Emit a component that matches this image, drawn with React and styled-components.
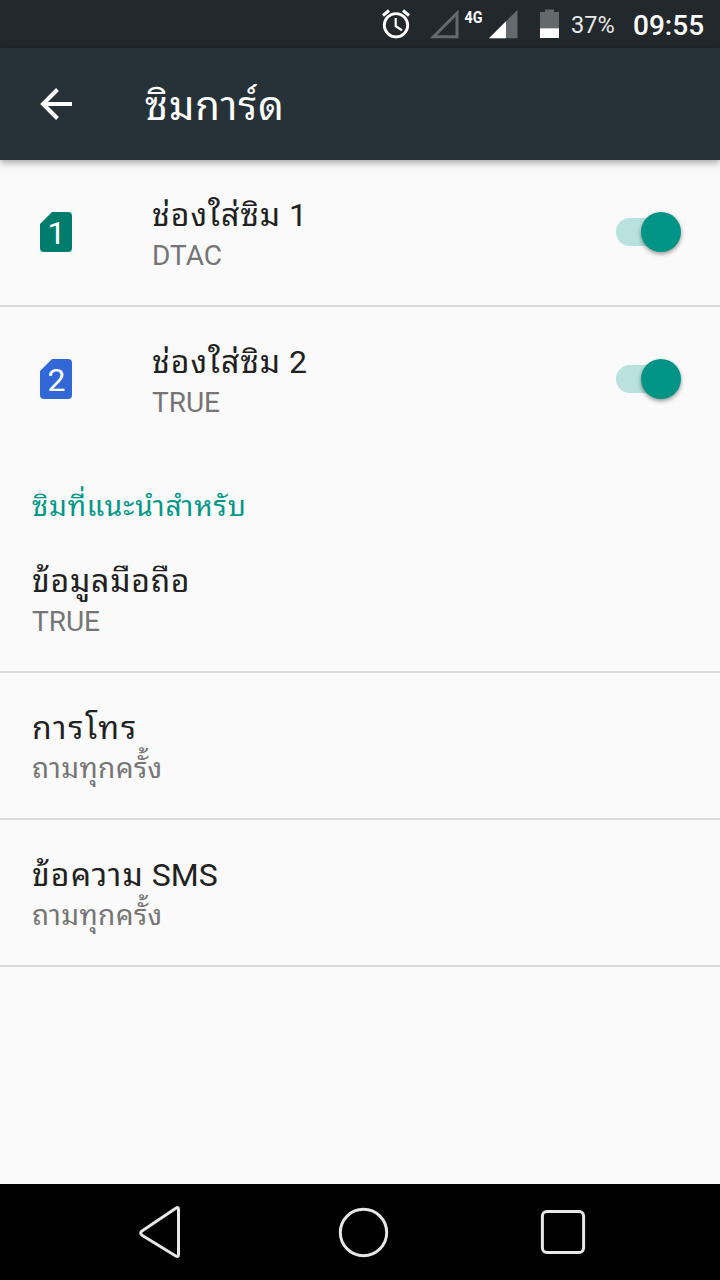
import React from "react";
import styled, { createGlobalStyle } from "styled-components";

const GlobalStyle = createGlobalStyle`
  * { box-sizing: border-box; }
  body { margin: 0; background: #fafafa; font-family: Roboto, "Noto Sans Thai Looped", "Noto Looped Thai", "Droid Sans Thai", Loma, Waree, Garuda, "Noto Serif Thai", Norasi, "Noto Sans Thai", "Noto Sans", sans-serif; }
  svg { display: block; flex: none; }
`;

const Screen = styled.div`
  width: 720px;
  height: 1280px;
  display: flex;
  flex-direction: column;
  background: #fafafa;
  overflow: hidden;
`;

const StatusBar = styled.div`
  flex: none;
  height: 48px;
  display: flex;
  align-items: flex-start;
  padding-left: 380px;
  background: #22282b;
  color: #fff;
`;

const BatteryLevel = styled.span`
  width: 44px;
  margin-left: 11px;
  font-size: 23.5px;
  line-height: 50px;
  font-weight: 400;
  color: #e8e9e9;
  white-space: nowrap;
`;

const Clock = styled.span`
  margin-left: 18px;
  font-size: 28px;
  line-height: 52px;
  font-weight: 500;
  white-space: nowrap;
`;

const AppBar = styled.header`
  flex: none;
  height: 112px;
  display: flex;
  align-items: center;
  padding-left: 40px;
  background: #273238;
  box-shadow: 0 2px 8px rgba(0, 0, 0, 0.4);
  z-index: 1;
`;

const Heading = styled.h1`
  margin: 0 0 0 73px;
  padding-top: 6px;
  font-size: 40px;
  line-height: 52px;
  letter-spacing: 1px;
  font-weight: 400;
  color: #fff;
  white-space: nowrap;
`;

const List = styled.main`
  flex: 1;
  display: flex;
  flex-direction: column;
`;

const Row = styled.div`
  height: 147px;
  display: flex;
  align-items: center;
  padding: 0 32px 1px;
  border-bottom: 2px solid ${(p) => (p.$divider ? "#dadada" : "transparent")};
`;

const IconSlot = styled.div`
  width: 120px;
  padding-left: 8px;
`;

const SimChip = styled.div`
  width: 32px;
  height: 40px;
  padding-left: 1px;
  border-radius: 4px;
  clip-path: polygon(12px 0, 100% 0, 100% 100%, 0 100%, 0 12px);
  background: ${(p) => p.$color};
  color: #fff;
  font-size: 32px;
  line-height: 42px;
  text-align: center;
`;

const Labels = styled.div`
  flex: 1;
  display: flex;
  flex-direction: column;
  padding-top: 4px;
`;

const Title = styled.div`
  height: 41px;
  font-size: 32px;
  line-height: 40px;
  letter-spacing: ${(p) => p.$tracking}px;
  color: #212121;
  white-space: nowrap;
`;

const Latin = styled.span`
  letter-spacing: 0;
  white-space: pre;
`;

const Summary = styled.div`
  height: 37px;
  font-size: 28px;
  line-height: 39px;
  letter-spacing: ${(p) => p.$tracking || 0}px;
  color: #757575;
  white-space: nowrap;
`;

const Category = styled.h2`
  height: 72px;
  margin: 0;
  padding: 34px 32px 0;
  font-size: 28px;
  line-height: 37px;
  letter-spacing: 0.9px;
  font-weight: 400;
  color: #009688;
  white-space: nowrap;
`;

const Track = styled.div`
  width: 64px;
  height: 28px;
  margin-right: 8px;
  display: flex;
  align-items: center;
  justify-content: flex-end;
  border-radius: 14px;
  background: #b9e1dd;
`;

const Thumb = styled.div`
  flex: none;
  width: 40px;
  height: 40px;
  margin-right: -1px;
  border-radius: 50%;
  background: #009486;
  box-shadow: 0 2px 4px rgba(0, 0, 0, 0.4);
`;

const NavBar = styled.nav`
  flex: none;
  height: 96px;
  display: flex;
  background: #000;
`;

const sims = [
  { id: 1, color: "#007c6d", carrier: "DTAC", divider: true },
  { id: 2, color: "#3367d6", carrier: "TRUE", divider: false },
];

const preferences = [
  { title: "ข้อมูลมือถือ", tracking: 0.75, value: "TRUE" },
  { title: "การโทร", tracking: 1.8, value: "ถามทุกครั้ง", valueTracking: 0.4 },
  { title: "ข้อความ", suffix: " SMS", tracking: 1.1, value: "ถามทุกครั้ง", valueTracking: 0.4 },
];

function StatusIcons() {
  return (
    <svg width="180" height="48" viewBox="380 0 180 48">
      <g fill="none" stroke="#fff">
        <circle cx="396" cy="25.3" r="11.7" strokeWidth="2.8" />
        <path d="M383 15.5l6-5M409 15.5l-6-5" strokeWidth="3" />
        <path d="M395.7 18v8.2l6.3 4" strokeWidth="2.2" />
      </g>
      <path d="M433.5 36.7L457 13.2v23.5z" fill="none" stroke="#64696b" strokeWidth="3" />
      <text x="464.5" y="22.5" fill="#fff" fontFamily="Roboto, sans-serif" fontWeight="700" fontSize="16.5" textLength="18" lengthAdjust="spacingAndGlyphs">4G</text>
      <path d="M489 38.3L517.5 9.8v28.5z" fill="#64696b" />
      <path d="M489 38.3L506 21.3v17z" fill="#fff" />
      <path d="M540 12h5V9.5h9V12h5v16.5h-19z" fill="#64696b" />
      <path d="M540 28.3h19V38h-19z" fill="#fff" />
    </svg>
  );
}

function BackArrow() {
  return (
    <svg width="32" height="32" viewBox="0 0 32 32" fill="none" stroke="#fff" strokeWidth="4">
      <path d="M32 16H3.5M17.5 1.5L3 16l14.5 14.5" />
    </svg>
  );
}

function NavIcons() {
  return (
    <svg width="720" height="96" viewBox="0 1184 720 96" fill="none" stroke="#e6e6e6" strokeWidth="3" strokeLinejoin="round">
      <path d="M142 1231L175.8 1208.2q2.7-1.6 2.7 1v45.6q0 2.8-2.7 1.2L142 1235.2q-2.6-2.1 0-4.2z" />
      <circle cx="363.5" cy="1232.5" r="23.2" />
      <rect x="542.4" y="1211.4" width="41.2" height="41.2" rx="4.5" />
    </svg>
  );
}

export default function App() {
  return (
    <Screen>
      <GlobalStyle />
      <StatusBar>
        <StatusIcons />
        <BatteryLevel>37%</BatteryLevel>
        <Clock>09:55</Clock>
      </StatusBar>
      <AppBar>
        <BackArrow />
        <Heading>ซิมการ์ด</Heading>
      </AppBar>
      <List>
        {sims.map((sim) => (
          <Row key={sim.id} $divider={sim.divider}>
            <IconSlot>
              <SimChip $color={sim.color}>{sim.id}</SimChip>
            </IconSlot>
            <Labels>
              <Title $tracking={1}>
                ช่องใส่ซิม<Latin>{` ${sim.id}`}</Latin>
              </Title>
              <Summary>{sim.carrier}</Summary>
            </Labels>
            <Track>
              <Thumb />
            </Track>
          </Row>
        ))}
        <Category>ซิมที่แนะนำสำหรับ</Category>
        {preferences.map((item) => (
          <Row key={item.title} $divider>
            <Labels>
              <Title $tracking={item.tracking}>
                {item.title}
                {item.suffix && <Latin>{item.suffix}</Latin>}
              </Title>
              <Summary $tracking={item.valueTracking}>{item.value}</Summary>
            </Labels>
          </Row>
        ))}
      </List>
      <NavBar>
        <NavIcons />
      </NavBar>
    </Screen>
  );
}
